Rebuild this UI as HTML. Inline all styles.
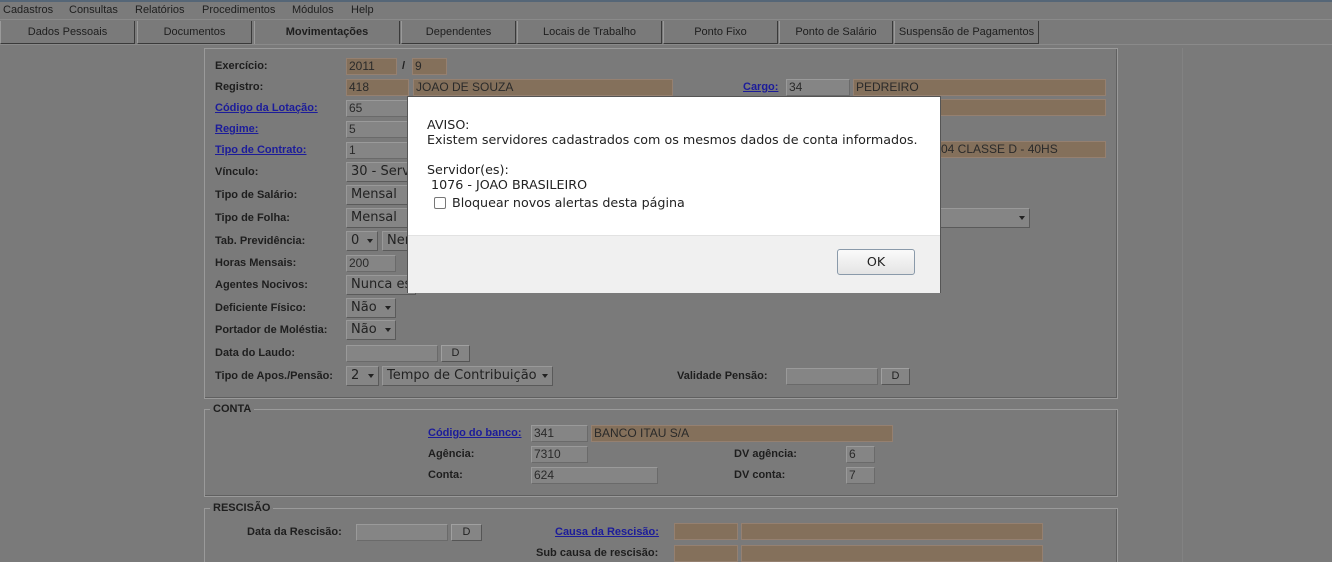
<!DOCTYPE html>
<html><head><meta charset="utf-8"><style>
*{margin:0;padding:0;box-sizing:border-box}
html,body{width:1332px;height:562px;overflow:hidden}
body{background:#7a7a7a;font-family:"Liberation Sans",Arial,sans-serif;position:relative}
.a{position:absolute}
.menu{left:0;top:0;width:1332px;height:20px;background:#7b7b7b;border-bottom:1px solid #8a8a8a;font-size:11px;color:#1e1e1e}
.menu span{position:absolute;top:4px}
.tab{top:21px;height:23px;background:#7a7a7a;border-right:1px solid #3a3a3a;border-bottom:1px solid #3a3a3a;border-left:1px solid #9a9a9a;font-size:11px;color:#1e1e1e;text-align:center;line-height:22px}
.l{font-size:11px;font-weight:bold;color:#1e1e1e}
.k{font-size:11px;font-weight:bold;color:#1c1c9a;text-decoration:underline}
.i{height:17px;background:#858585;border:1px solid #9a9a9a;border-right-color:#6a6a6a;border-bottom-color:#6a6a6a;font-size:12px;color:#2a2a2a;padding-left:2px;line-height:15px;white-space:nowrap;overflow:hidden}
.t{background:#84705b;border-color:#958070}
.s{height:20px;background:#858585;border:1px solid #999;border-right-color:#5a5a5a;border-bottom-color:#5a5a5a;font-family:"DejaVu Sans",sans-serif;font-size:13px;color:#222;padding-left:4px;line-height:18px;white-space:nowrap;overflow:hidden}
.ar{position:absolute;right:4px;top:7px;width:0;height:0;border-left:3px solid transparent;border-right:3px solid transparent;border-top:4px solid #222}
.b{height:17px;background:#858585;border:1px solid #a0a0a0;border-right-color:#555;border-bottom-color:#555;font-size:11px;text-align:center;line-height:15px;color:#222}
.fs{border:1px solid #9a9a9a;box-shadow:inset -1px -1px 0 #606060}
.lg{font-size:11px;font-weight:bold;color:#1e1e1e;background:#7a7a7a;padding:0 3px}
</style></head><body>
<div class="a menu"><span style="left:3px">Cadastros</span><span style="left:69px">Consultas</span><span style="left:135px">Relatórios</span><span style="left:202px">Procedimentos</span><span style="left:292px">Módulos</span><span style="left:351px">Help</span></div>
<div class="a" style="left:0;top:0;width:1332px;height:2px;background:#556677"></div>
<div class="a tab" style="left:0;width:135px">Dados Pessoais</div>
<div class="a tab" style="left:137px;width:115px">Documentos</div>
<div class="a tab" style="left:254px;width:146px;font-weight:bold;border-bottom:none">Movimentações</div>
<div class="a tab" style="left:401px;width:115px">Dependentes</div>
<div class="a tab" style="left:517px;width:145px">Locais de Trabalho</div>
<div class="a tab" style="left:663px;width:115px">Ponto Fixo</div>
<div class="a tab" style="left:779px;width:114px">Ponto de Salário</div>
<div class="a tab" style="left:894px;width:145px">Suspensão de Pagamentos</div>
<div class="a" style="left:0;top:44px;width:1332px;height:1px;background:#8a8a8a"></div>
<div class="a fs" style="left:204px;top:48px;width:914px;height:351px"></div>
<div class="a" style="left:1182px;top:48px;width:1px;height:514px;background:#828282"></div>

<div class="a l" style="left:215px;top:60px">Exercício:</div>
<div class="a i t" style="left:346px;top:58px;width:51px">2011</div>
<div class="a l" style="left:402px;top:60px">/</div>
<div class="a i t" style="left:412px;top:58px;width:35px">9</div>
<div class="a l" style="left:215px;top:81px">Registro:</div>
<div class="a i t" style="left:346px;top:79px;width:63px">418</div>
<div class="a i t" style="left:413px;top:79px;width:260px">JOAO DE SOUZA</div>
<div class="a k" style="left:743px;top:81px">Cargo:</div>
<div class="a i" style="left:786px;top:79px;width:64px">34</div>
<div class="a i t" style="left:853px;top:79px;width:253px">PEDREIRO</div>
<div class="a i t" style="left:853px;top:99px;width:253px"></div>
<div class="a k" style="left:215px;top:102px">Código da Lotação:</div>
<div class="a i" style="left:346px;top:100px;width:63px">65</div>
<div class="a k" style="left:215px;top:123px">Regime:</div>
<div class="a i" style="left:346px;top:121px;width:63px">5</div>
<div class="a k" style="left:215px;top:144px">Tipo de Contrato:</div>
<div class="a i" style="left:346px;top:142px;width:63px">1</div>
<div class="a i t" style="left:853px;top:141px;width:253px;padding-left:87px">04 CLASSE D - 40HS</div>
<div class="a l" style="left:215px;top:166px">Vínculo:</div>
<div class="a s" style="left:346px;top:162px;width:70px">30 - Serv</div>
<div class="a l" style="left:215px;top:189px">Tipo de Salário:</div>
<div class="a s" style="left:346px;top:185px;width:70px">Mensal</div>
<div class="a l" style="left:215px;top:212px">Tipo de Folha:</div>
<div class="a s" style="left:346px;top:208px;width:70px">Mensal</div>
<div class="a s" style="left:900px;top:208px;width:130px"><div class="ar"></div></div>
<div class="a l" style="left:215px;top:235px">Tab. Previdência:</div>
<div class="a s" style="left:346px;top:231px;width:32px">0<div class="ar"></div></div>
<div class="a s" style="left:382px;top:231px;width:40px">Ner</div>
<div class="a l" style="left:215px;top:257px">Horas Mensais:</div>
<div class="a i" style="left:346px;top:255px;width:50px">200</div>
<div class="a l" style="left:215px;top:279px">Agentes Nocivos:</div>
<div class="a s" style="left:346px;top:275px;width:70px">Nunca es</div>
<div class="a l" style="left:215px;top:302px">Deficiente Físico:</div>
<div class="a s" style="left:346px;top:298px;width:50px">Não<div class="ar"></div></div>
<div class="a l" style="left:215px;top:324px">Portador de Moléstia:</div>
<div class="a s" style="left:346px;top:320px;width:50px">Não<div class="ar"></div></div>
<div class="a l" style="left:215px;top:347px">Data do Laudo:</div>
<div class="a i" style="left:346px;top:345px;width:92px"></div>
<div class="a b" style="left:441px;top:345px;width:29px">D</div>
<div class="a l" style="left:215px;top:370px">Tipo de Apos./Pensão:</div>
<div class="a s" style="left:346px;top:366px;width:33px">2<div class="ar"></div></div>
<div class="a s" style="left:382px;top:366px;width:171px">Tempo de Contribuição<div class="ar"></div></div>
<div class="a l" style="left:677px;top:370px">Validade Pensão:</div>
<div class="a i" style="left:786px;top:368px;width:92px"></div>
<div class="a b" style="left:881px;top:368px;width:29px">D</div>

<div class="a fs" style="left:204px;top:409px;width:914px;height:88px"></div>
<div class="a lg" style="left:210px;top:403px">CONTA</div>
<div class="a k" style="left:428px;top:427px">Código do banco:</div>
<div class="a i" style="left:531px;top:425px;width:57px">341</div>
<div class="a i t" style="left:591px;top:425px;width:302px">BANCO ITAU S/A</div>
<div class="a l" style="left:428px;top:448px">Agência:</div>
<div class="a i" style="left:531px;top:446px;width:57px">7310</div>
<div class="a l" style="left:734px;top:448px">DV agência:</div>
<div class="a i" style="left:846px;top:446px;width:29px">6</div>
<div class="a l" style="left:428px;top:469px">Conta:</div>
<div class="a i" style="left:531px;top:467px;width:127px">624</div>
<div class="a l" style="left:734px;top:469px">DV conta:</div>
<div class="a i" style="left:846px;top:467px;width:29px">7</div>

<div class="a fs" style="left:204px;top:508px;width:914px;height:60px"></div>
<div class="a lg" style="left:210px;top:502px">RESCISÃO</div>
<div class="a l" style="left:247px;top:526px">Data da Rescisão:</div>
<div class="a i" style="left:356px;top:524px;width:92px"></div>
<div class="a b" style="left:451px;top:524px;width:31px">D</div>
<div class="a k" style="left:555px;top:526px">Causa da Rescisão:</div>
<div class="a i t" style="left:674px;top:523px;width:64px"></div>
<div class="a i t" style="left:741px;top:523px;width:302px"></div>
<div class="a l" style="left:536px;top:547px">Sub causa de rescisão:</div>
<div class="a i t" style="left:674px;top:545px;width:64px"></div>
<div class="a i t" style="left:741px;top:545px;width:302px"></div>

<div class="a" style="left:407px;top:96px;width:534px;height:197px;background:#fff;border:1px solid #555;font-family:'DejaVu Sans',sans-serif;font-size:12.7px;color:#222">
 <div class="a" style="left:19px;top:20px;line-height:15px">AVISO:<br>Existem servidores cadastrados com os mesmos dados de conta informados.<br><br>Servidor(es):<br>&nbsp;1076 - JOAO BRASILEIRO</div>
 <div class="a" style="left:26px;top:100px;width:12px;height:12px;border:1px solid #777;border-radius:2px"></div>
 <div class="a" style="left:44px;top:98px">Bloquear novos alertas desta página</div>
 <div class="a" style="left:0;top:138px;width:532px;height:58px;background:#f0f0f0;border-top:1px solid #e2e2e2"></div>
 <div class="a" style="left:429px;top:152px;width:78px;height:26px;border:1px solid #8a9aaa;border-radius:3px;background:linear-gradient(#fafafa,#e4e4e4);text-align:center;line-height:24px">OK</div>
</div>
</body></html>
